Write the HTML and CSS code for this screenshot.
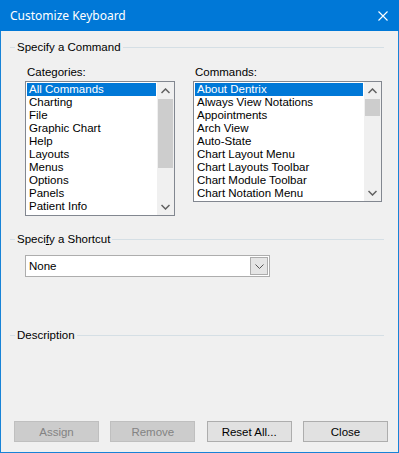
FILE: index.html
```html
<!DOCTYPE html>
<html lang="en">
<head>
    <meta charset="UTF-8">
    <title>Customize Keyboard</title>
    <link rel="stylesheet" href="styles.css">
</head>
<body>
    <div class="window">
        <div class="titlebar">
            <span class="title">Customize Keyboard</span>
            <svg class="close-x" width="10" height="10" viewBox="0 0 10 10">
                <path d="M0.5 0.5 L9.5 9.5 M9.5 0.5 L0.5 9.5" stroke="#fff" stroke-width="1.1" fill="none"/>
            </svg>
        </div>

        <div class="dialog">
            <div class="group-head">
                <span class="seg"></span><span class="group-title">Specify a Command</span><span class="rule"></span>
            </div>

            <div class="lists">
                <div class="list-col cat-col">
                    <div class="list-label">Categories:</div>
                    <div class="listbox cat-box">
                        <ul class="items">
                            <li class="selected">All Commands</li>
                            <li>Charting</li>
                            <li>File</li>
                            <li>Graphic Chart</li>
                            <li>Help</li>
                            <li>Layouts</li>
                            <li>Menus</li>
                            <li>Options</li>
                            <li>Panels</li>
                            <li>Patient Info</li>
                        </ul>
                        <div class="scrollbar">
                            <div class="sb-arrow"><svg width="9" height="6" viewBox="0 0 9 6"><path d="M0.5 5 L4.5 1 L8.5 5" stroke="#606060" stroke-width="1.5" fill="none"/></svg></div>
                            <div class="sb-track"><div class="sb-thumb cat-thumb"></div></div>
                            <div class="sb-arrow"><svg width="9" height="6" viewBox="0 0 9 6"><path d="M0.5 1 L4.5 5 L8.5 1" stroke="#606060" stroke-width="1.5" fill="none"/></svg></div>
                        </div>
                    </div>
                </div>
                <div class="list-col cmd-col">
                    <div class="list-label">Commands:</div>
                    <div class="listbox cmd-box">
                        <ul class="items">
                            <li class="selected">About Dentrix</li>
                            <li>Always View Notations</li>
                            <li>Appointments</li>
                            <li>Arch View</li>
                            <li>Auto-State</li>
                            <li>Chart Layout Menu</li>
                            <li>Chart Layouts Toolbar</li>
                            <li>Chart Module Toolbar</li>
                            <li>Chart Notation Menu</li>
                        </ul>
                        <div class="scrollbar">
                            <div class="sb-arrow"><svg width="9" height="6" viewBox="0 0 9 6"><path d="M0.5 5 L4.5 1 L8.5 5" stroke="#606060" stroke-width="1.5" fill="none"/></svg></div>
                            <div class="sb-track"><div class="sb-thumb cmd-thumb"></div></div>
                            <div class="sb-arrow"><svg width="9" height="6" viewBox="0 0 9 6"><path d="M0.5 1 L4.5 5 L8.5 1" stroke="#606060" stroke-width="1.5" fill="none"/></svg></div>
                        </div>
                    </div>
                </div>
            </div>

            <div class="group-head shortcut-head">
                <span class="seg"></span><span class="group-title">Speci<u>f</u>y a Shortcut</span><span class="rule"></span>
            </div>

            <div class="combo">
                <span class="combo-value">None</span>
                <span class="combo-btn"><svg width="9" height="5" viewBox="0 0 9 5"><path d="M0.5 0.5 L4.5 4.5 L8.5 0.5" stroke="#555" stroke-width="1" fill="none"/></svg></span>
            </div>

            <div class="group-head desc-head">
                <span class="seg"></span><span class="group-title">Description</span><span class="rule"></span>
            </div>

            <div class="buttons">
                <button class="btn" disabled>Assign</button>
                <button class="btn" disabled>Remove</button>
                <button class="btn">Reset All...</button>
                <button class="btn">Close</button>
            </div>
        </div>
    </div>
</body>
</html>
```

FILE: styles.css
```css
body {
    margin: 0;
    font-family: "Liberation Sans", Arial, sans-serif;
    font-size: 11.5px;
    background: #f0f0f0;
}
.window {
    width: 399px;
    height: 453px;
    box-sizing: border-box;
    border: 1px solid #1883d7;
    border-top: none;
    background: #f0f0f0;
    display: flex;
    flex-direction: column;
}
.titlebar {
    height: 31px;
    margin: 0 -1px;
    background: #0078d7;
    color: #fff;
    display: flex;
    align-items: center;
    justify-content: space-between;
    padding: 0 11px 0 10px;
    box-sizing: border-box;
}
.title {
    font-family: "Noto Sans", sans-serif;
    font-size: 12px;
}
.close-x {
    display: block;
}
.dialog {
    flex: 1;
    display: flex;
    flex-direction: column;
    padding: 10px 14px 10px 9px;
}
.group-head {
    display: flex;
    align-items: center;
    height: 13px;
    line-height: 13px;
    color: #000;
}
.group-head .seg {
    width: 5px;
    height: 1px;
    background: #d5dfe5;
}
.group-head .group-title {
    padding: 0 2px;
}
.group-head .rule {
    flex: 1;
    height: 1px;
    background: #d5dfe5;
}
.lists {
    display: flex;
    gap: 18px;
    margin-top: 12px;
    padding-left: 15px;
    align-items: flex-start;
}
.list-label {
    height: 13px;
    line-height: 13px;
    padding-left: 2px;
    margin-bottom: 2px;
}
.cat-col {
    width: 150px;
}
.cmd-col {
    width: 189px;
}
.listbox {
    display: flex;
    border: 1px solid #828790;
    background: #fff;
}
.cat-box {
    height: 133px;
}
.cmd-box {
    height: 119px;
}
.items {
    flex: 1;
    list-style: none;
    margin: 0;
    padding: 1px;
    overflow: hidden;
}
.items li {
    height: 13px;
    line-height: 13px;
    padding-left: 2px;
    white-space: nowrap;
}
.items li.selected {
    background: #0078d7;
    color: #fff;
}
.scrollbar {
    width: 17px;
    background: #f0f0f0;
    display: flex;
    flex-direction: column;
}
.sb-arrow {
    height: 17px;
    display: flex;
    align-items: center;
    justify-content: center;
}
.sb-track {
    flex: 1;
}
.sb-thumb {
    background: #cdcdcd;
    margin: 0 1px;
}
.cat-thumb {
    height: 69px;
}
.cmd-thumb {
    height: 17px;
}
.shortcut-head {
    margin-top: 17px;
}
.combo {
    margin: 9px 0 0 15px;
    width: 245px;
    height: 22px;
    box-sizing: border-box;
    border: 1px solid #adadad;
    background: #fff;
    display: flex;
    align-items: center;
    justify-content: space-between;
    padding: 0 1px 0 3px;
}
.combo-btn {
    width: 18px;
    height: 18px;
    box-sizing: border-box;
    background: #e5e5e5;
    border: 1px solid #acacac;
    display: flex;
    align-items: center;
    justify-content: center;
}
.desc-head {
    margin-top: 52px;
}
.buttons {
    margin: auto -4px 0 0;
    display: flex;
    justify-content: space-between;
    padding-left: 4px;
}
.btn {
    width: 85px;
    height: 21px;
    font-family: "Liberation Sans", Arial, sans-serif;
    font-size: 11.5px;
    background: #e1e1e1;
    border: 1px solid #adadad;
    color: #000;
    padding: 0;
}
.btn:disabled {
    background: #cccccc;
    border-color: #bfbfbf;
    color: #838383;
}
```
